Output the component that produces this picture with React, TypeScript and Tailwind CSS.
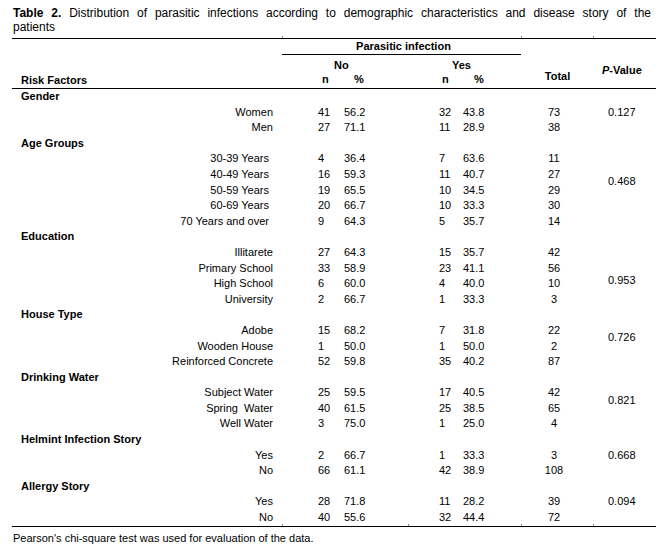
type Row = [string, string, string, string, string, string];

type Group = {
  name: string;
  p: string;
  pt: string;
  labelPr?: string;
  rows: Row[];
};

const groups: Group[] = [
  {
    name: "Gender",
    p: "0.127",
    pt: "pt-[15.6px]",
    rows: [
      ["Women", "41", "56.2", "32", "43.8", "73"],
      ["Men", "27", "71.1", "11", "28.9", "38"],
    ],
  },
  {
    name: "Age Groups",
    p: "0.468",
    pt: "pt-[38.6px]",
    labelPr: "pr-[13px]",
    rows: [
      ["30-39 Years", "4", "36.4", "7", "63.6", "11"],
      ["40-49 Years", "16", "59.3", "11", "40.7", "27"],
      ["50-59 Years", "19", "65.5", "10", "34.5", "29"],
      ["60-69 Years", "20", "66.7", "10", "33.3", "30"],
      ["70 Years and over", "9", "64.3", "5", "35.7", "14"],
    ],
  },
  {
    name: "Education",
    p: "0.953",
    pt: "pt-[44px]",
    rows: [
      ["Illitarete", "27", "64.3", "15", "35.7", "42"],
      ["Primary School", "33", "58.9", "23", "41.1", "56"],
      ["High School", "6", "60.0", "4", "40.0", "10"],
      ["University", "2", "66.7", "1", "33.3", "3"],
    ],
  },
  {
    name: "House Type",
    p: "0.726",
    pt: "pt-[23px]",
    rows: [
      ["Adobe", "15", "68.2", "7", "31.8", "22"],
      ["Wooden House", "1", "50.0", "1", "50.0", "2"],
      ["Reinforced Concrete", "52", "59.8", "35", "40.2", "87"],
    ],
  },
  {
    name: "Drinking Water",
    p: "0.821",
    pt: "pt-[23.4px]",
    rows: [
      ["Subject Water", "25", "59.5", "17", "40.5", "42"],
      ["Spring\u00a0 Water", "40", "61.5", "25", "38.5", "65"],
      ["Well Water", "3", "75.0", "1", "25.0", "4"],
    ],
  },
  {
    name: "Helmint Infection Story",
    p: "0.668",
    pt: "pt-[15.6px]",
    rows: [
      ["Yes", "2", "66.7", "1", "33.3", "3"],
      ["No", "66", "61.1", "42", "38.9", "108"],
    ],
  },
  {
    name: "Allergy Story",
    p: "0.094",
    pt: "pt-[15.6px]",
    rows: [
      ["Yes", "28", "71.8", "11", "28.2", "39"],
      ["No", "40", "55.6", "32", "44.4", "72"],
    ],
  },
];

function Tick() {
  return <span className="w-px h-full bg-[#8a8a8a]" />;
}

export default function App() {
  return (
    <div className="w-[669px] h-[554px] bg-white text-black font-['Liberation_Sans',Arial,sans-serif] text-[11px]">
      {/* caption */}
      <div className="pl-[13px] w-[651px] pt-[6px] text-[12px] leading-[14px]">
        <div className="text-justify [text-align-last:justify]">
          <span className="font-bold">Table 2.</span> Distribution of parasitic infections according to demographic characteristics and disease story of the
        </div>
        <div>patients</div>
      </div>

      <div className="ml-[12px] w-[644px] mt-[4px]">
        {/* column marks above the top rule */}
        <div className="flex h-[2px] -mt-[2px]">
          <span className="w-[270px]" />
          <Tick />
          <span className="w-[238px]" />
          <Tick />
          <span className="w-[71px]" />
          <Tick />
        </div>

        {/* header */}
        <div className="flex h-[51px] border-y border-black leading-[14px] font-bold">
          <div className="w-[270px] flex items-end pl-[9px] pb-px">Risk Factors</div>
          <div className="w-[239px] flex flex-col">
            <div className="h-[16px] border-b border-black text-center pl-[4px]">Parasitic infection</div>
            <div className="flex mt-[3px]">
              <div className="w-[126px] pl-[52px]">No</div>
              <div className="pl-[44px]">Yes</div>
            </div>
            <div className="flex">
              <div className="w-[126px] flex">
                <span className="w-[72px] pl-[40px]">n</span>
                <span>%</span>
              </div>
              <div className="flex">
                <span className="w-[66px] pl-[34px]">n</span>
                <span>%</span>
              </div>
            </div>
          </div>
          <div className="w-[72px] pt-[30px] text-center pl-[1px]">Total</div>
          <div className="w-[63px] pt-[24px] pl-[9px]">
            <span className="italic">P</span>-Value
          </div>
        </div>

        {/* body */}
        <div className="leading-[15.6px]">
          {groups.map((g) => (
            <div key={g.name} className="flex">
              <div className="w-[581px]">
                <div className="h-[15.6px] pl-[9px] font-bold">{g.name}</div>
                {g.rows.map((r) => (
                  <div key={r[0]} className="flex h-[15.6px]">
                    <div className={`w-[270px] text-right whitespace-pre ${g.labelPr ?? "pr-[9px]"}`}>{r[0]}</div>
                    <div className="w-[62px] pl-[36px]">{r[1]}</div>
                    <div className="w-[64px]">{r[2]}</div>
                    <div className="w-[55px] pl-[31px]">{r[3]}</div>
                    <div className="w-[58px]">{r[4]}</div>
                    <div className="w-[72px] text-center pr-[6px]">{r[5]}</div>
                  </div>
                ))}
              </div>
              <div className={`w-[63px] pl-[15px] ${g.pt}`}>{g.p}</div>
            </div>
          ))}
        </div>

        {/* column marks above the bottom rule */}
        <div className="flex h-[2px] -mt-[2px]">
          <span className="w-[270px]" />
          <Tick />
          <span className="w-[125px]" />
          <Tick />
          <span className="w-[112px]" />
          <Tick />
          <span className="w-[71px]" />
          <Tick />
        </div>
        <div className="border-t border-black" />

        <div className="pl-px mt-[4px] leading-[14px]">
          Pearson's chi-square test was used for evaluation of the data.
        </div>
      </div>
    </div>
  );
}
